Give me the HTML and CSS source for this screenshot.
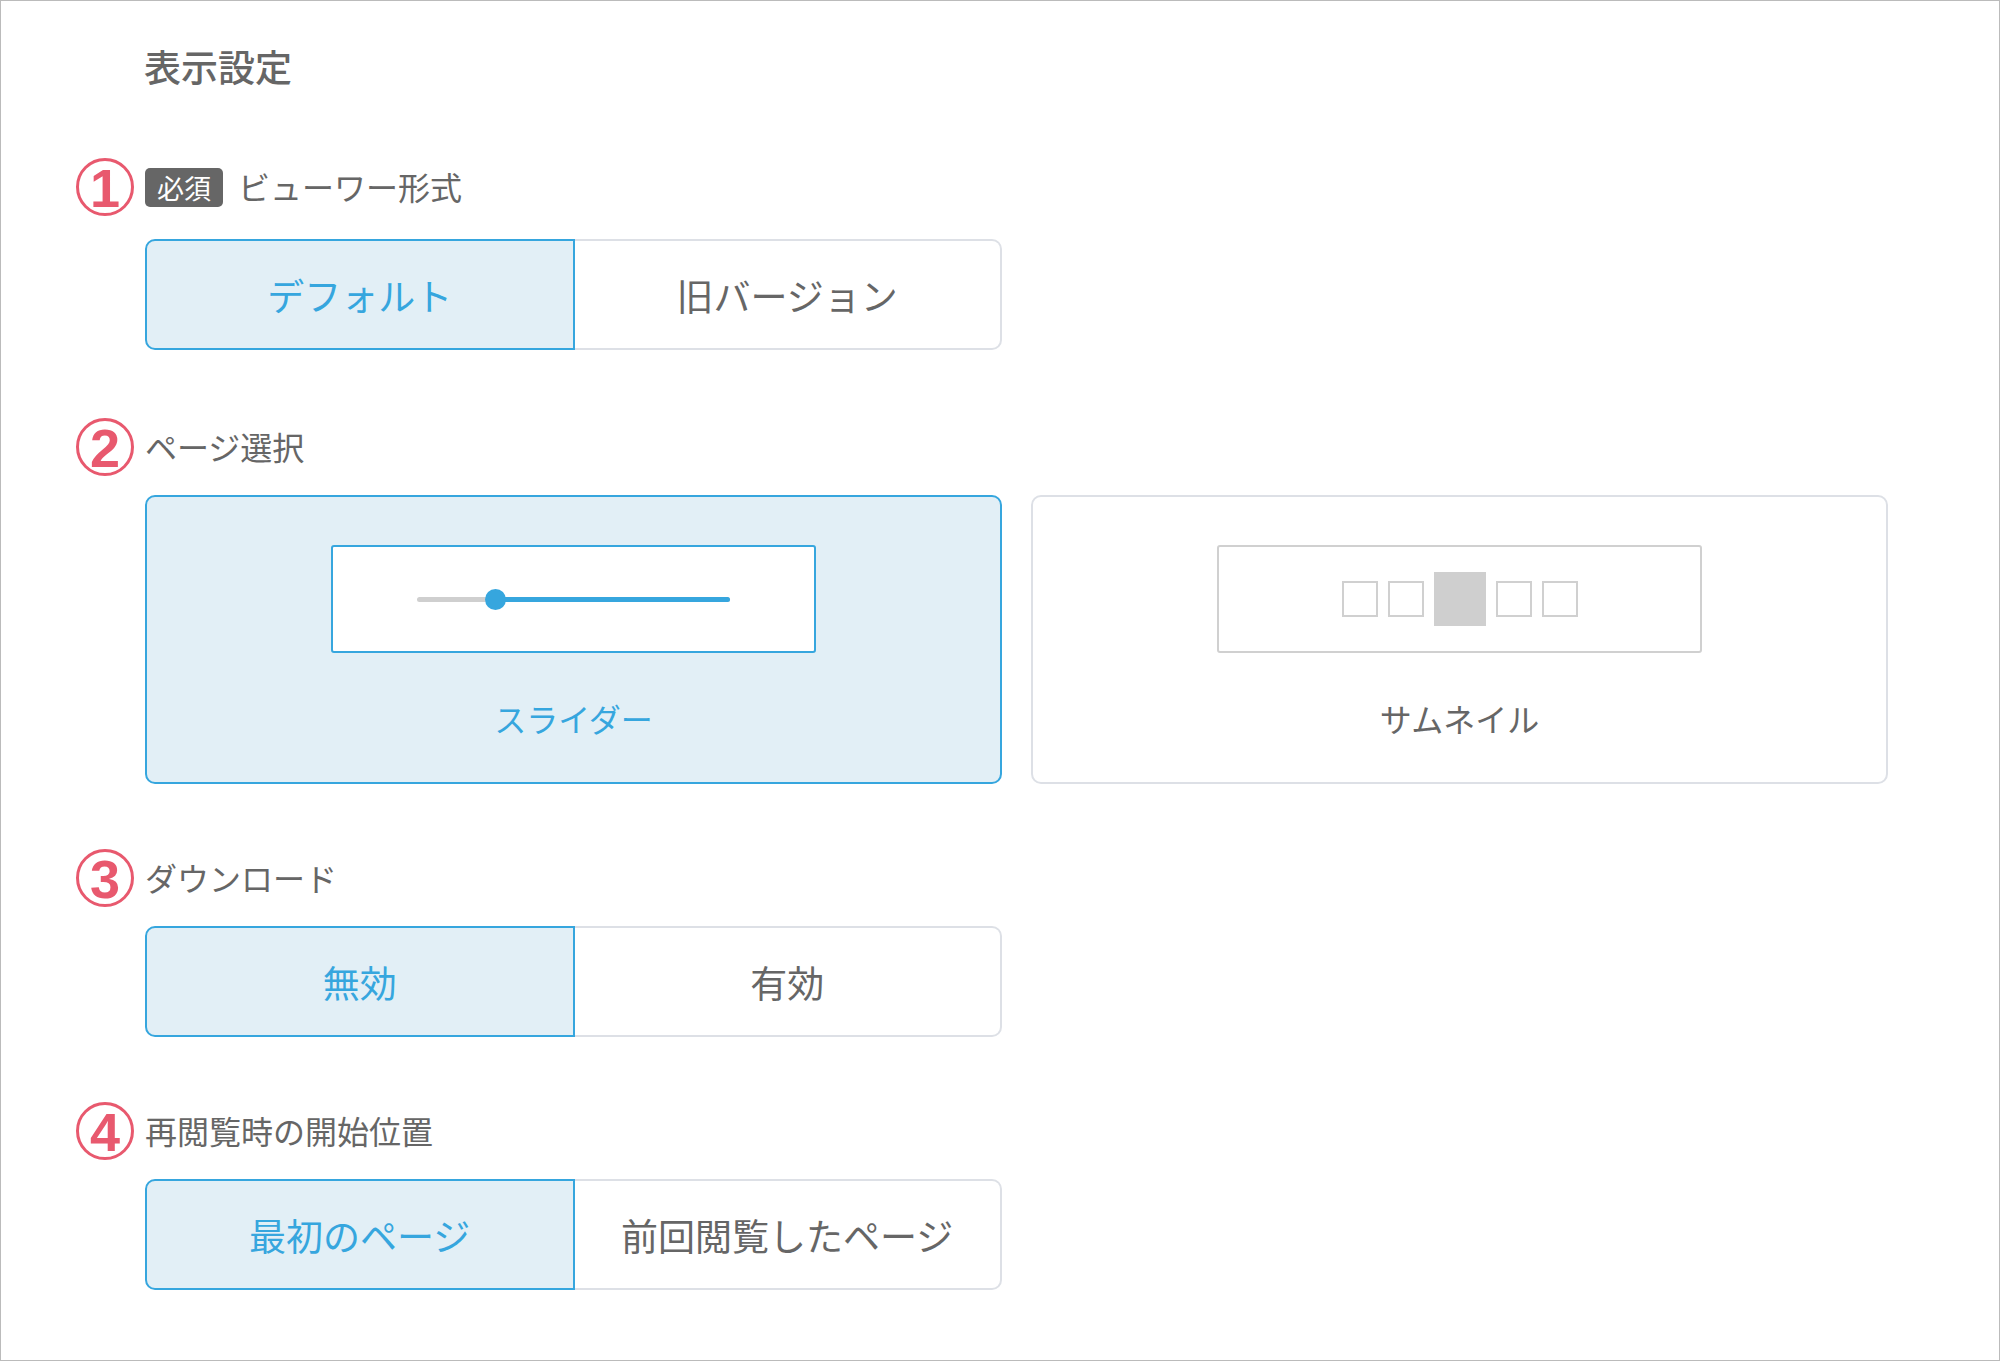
FILE: index.html
```html
<!DOCTYPE html>
<html lang="ja">
<head>
    <meta charset="UTF-8">
    <meta name="viewport" content="width=device-width, initial-scale=1.0">
    <title>表示設定</title>
    <link rel="stylesheet" href="styles.css">
</head>
<body>
    <div class="page">
        <h1 class="title">表示設定</h1>

        <div class="fields">
            <section class="field field-first">
                <div class="field-head">
                    <span class="num">1</span>
                    <span class="badge">必須</span>
                    <span class="field-label">ビューワー形式</span>
                </div>
                <div class="segment">
                    <div class="seg-btn is-active">デフォルト</div>
                    <div class="seg-btn">旧バージョン</div>
                </div>
            </section>

            <section class="field">
                <div class="field-head">
                    <span class="num">2</span>
                    <span class="field-label">ページ選択</span>
                </div>
                <div class="cards">
                    <div class="card is-active">
                        <div class="preview">
                            <div class="slider">
                                <span class="slider-fill"></span>
                                <span class="slider-knob"></span>
                            </div>
                        </div>
                        <div class="card-label">スライダー</div>
                    </div>
                    <div class="card">
                        <div class="preview">
                            <div class="thumbs">
                                <span class="thumb"></span>
                                <span class="thumb"></span>
                                <span class="thumb is-current"></span>
                                <span class="thumb"></span>
                                <span class="thumb"></span>
                            </div>
                        </div>
                        <div class="card-label">サムネイル</div>
                    </div>
                </div>
            </section>

            <section class="field">
                <div class="field-head">
                    <span class="num">3</span>
                    <span class="field-label">ダウンロード</span>
                </div>
                <div class="segment">
                    <div class="seg-btn is-active">無効</div>
                    <div class="seg-btn">有効</div>
                </div>
            </section>

            <section class="field">
                <div class="field-head">
                    <span class="num">4</span>
                    <span class="field-label">再閲覧時の開始位置</span>
                </div>
                <div class="segment">
                    <div class="seg-btn is-active">最初のページ</div>
                    <div class="seg-btn">前回閲覧したページ</div>
                </div>
            </section>
        </div>
    </div>
</body>
</html>
```

FILE: styles.css
```css
:root {
    --blue: #36a6de;
    --blue-bg: #e2eff6;
    --line: #dde0e6;
    --text: #666;
    --red: #e8596e;
}

* {
    box-sizing: border-box;
}

body {
    margin: 0;
    padding: 0;
    background: #fff;
    font-family: "Noto Sans CJK JP", "Noto Sans", sans-serif;
    color: var(--text);
}

.page {
    height: 1361px;
    border: 1px solid #bbb;
    padding: 29px 0 0 75px;
}

.title {
    margin: 0 0 56px 68px;
    font-size: 37px;
    font-weight: 500;
    line-height: 72px;
    color: var(--text);
}

.fields {
    display: flex;
    flex-direction: column;
    gap: 65px;
}

.field {
    display: flex;
    flex-direction: column;
    gap: 19px;
}

.field-first {
    gap: 23px;
    margin-bottom: 3px;
}

.field-head {
    display: flex;
    align-items: center;
    height: 58px;
}

.num {
    width: 58px;
    height: 58px;
    flex: none;
    border: 3px solid var(--red);
    border-radius: 50%;
    display: flex;
    justify-content: center;
    align-items: center;
    color: var(--red);
    font-family: "Liberation Sans", Arial, sans-serif;
    font-weight: bold;
    font-size: 54px;
    line-height: 1;
    padding-top: 2px;
    margin-right: 11px;
}

.badge {
    height: 39px;
    padding: 0 12px;
    background: #666;
    color: #fff;
    border-radius: 5px;
    font-size: 27px;
    line-height: 39px;
    margin-right: 15px;
}

.field-label {
    font-size: 32px;
    line-height: 1.3;
}

.segment {
    display: flex;
    width: 857px;
    height: 111px;
    margin-left: 69px;
}

.seg-btn {
    flex: 1;
    display: flex;
    justify-content: center;
    align-items: center;
    border: 2px solid var(--line);
    background: #fff;
    font-size: 37px;
    color: var(--text);
}

.seg-btn:first-child {
    border-radius: 10px 0 0 10px;
}

.seg-btn:last-child {
    border-left: none;
    border-radius: 0 10px 10px 0;
}

.seg-btn.is-active {
    border: 2px solid var(--blue);
    background: var(--blue-bg);
    color: var(--blue);
}

.cards {
    display: flex;
    gap: 29px;
    margin-left: 69px;
}

.card {
    width: 857px;
    height: 289px;
    border: 2px solid var(--line);
    border-radius: 10px;
    background: #fff;
    display: flex;
    flex-direction: column;
    align-items: center;
    padding-top: 48px;
}

.card.is-active {
    border-color: var(--blue);
    background: var(--blue-bg);
}

.preview {
    width: 485px;
    height: 108px;
    background: #fff;
    border: 2px solid #d0d0d0;
    border-radius: 3px;
    display: flex;
    justify-content: center;
    align-items: center;
}

.card.is-active .preview {
    border-color: var(--blue);
}

.card-label {
    margin-top: 43px;
    font-size: 32px;
    line-height: 44px;
    color: var(--text);
}

.card.is-active .card-label {
    color: var(--blue);
}

.slider {
    position: relative;
    width: 313px;
    height: 5px;
    border-radius: 3px;
    background: #cfcfcf;
}

.slider-fill {
    position: absolute;
    left: 78px;
    right: 0;
    top: 0;
    bottom: 0;
    border-radius: 3px;
    background: var(--blue);
}

.slider-knob {
    position: absolute;
    left: 68px;
    top: -8px;
    width: 21px;
    height: 21px;
    border-radius: 50%;
    background: var(--blue);
}

.thumbs {
    display: flex;
    align-items: center;
    gap: 10px;
}

.thumb {
    width: 36px;
    height: 36px;
    border: 2px solid #d0d0d0;
}

.thumb.is-current {
    width: 52px;
    height: 54px;
    border: none;
    background: #cfcfcf;
}
```
